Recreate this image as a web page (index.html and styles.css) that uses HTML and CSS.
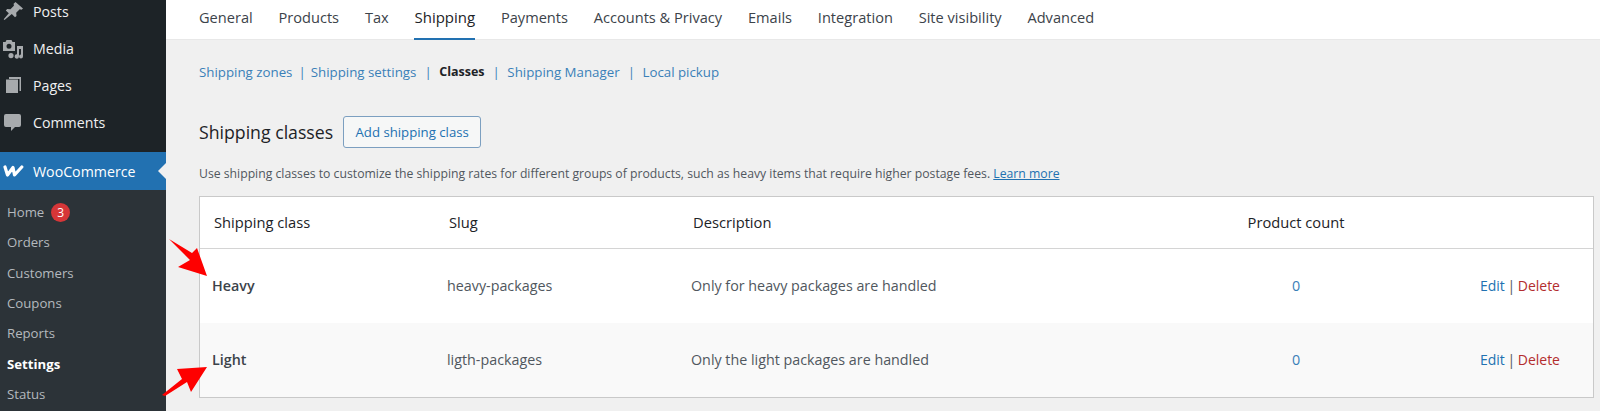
FILE: index.html
```html
<!DOCTYPE html>
<html lang="en">
<head>
<meta charset="utf-8">
<title>Shipping classes</title>
<link rel="stylesheet" href="styles.css">
</head>
<body>
<div class="app">
  <aside class="sidebar">
    <ul class="menu">
      <li class="menu-item"><svg class="mi" viewBox="0 0 20 20"><path d="M12.500 0l7.500 6.500-1.500 1.300-1.800-.6-3.500 3.500.3 3.300-1.500 1.300-3.200-3.400L1.500 18l-.8-.7 5.100-6.100-3-2.800 1.400-1.500 3.200.3 3.500-3.400-.3-2z"/></svg>Posts</li>
      <li class="menu-item"><svg class="mi" viewBox="0 0 20 20"><path fill-rule="evenodd" d="M0 3h2.500l1-2h5l1 2H12v9H0zm6 1.800a2.500 2.500 0 1 0 0 5 2.500 2.500 0 0 0 0-5z"/><path d="M14 7h6v10.500a2 2 0 1 1-2-2V10h-2v7.500a2.200 2.200 0 1 1-2-2.200zM8 14a2.600 2.600 0 1 1 0 5.200A2.600 2.600 0 0 1 8 14z"/></svg>Media</li>
      <li class="menu-item"><svg class="mi" viewBox="0 0 20 20"><path d="M6 2h12v14h-1.500V4H6z"/><path d="M3 4.500h12V18H3z"/></svg>Pages</li>
      <li class="menu-item"><svg class="mi" viewBox="0 0 20 20"><path d="M3 2h13a2 2 0 0 1 2 2v9a2 2 0 0 1-2 2h-4l-4 4v-4H3a2 2 0 0 1-2-2V4a2 2 0 0 1 2-2z"/></svg>Comments</li>
    </ul>
    <div class="woo">
      <svg class="woo-logo" viewBox="0 0 21 12"><path d="M2 2l2.500 8L10 2.500 11.500 10 18.800 2" fill="none" stroke="#fff" stroke-width="3.200" stroke-linejoin="round" stroke-linecap="round"/></svg>
      <span>WooCommerce</span>
    </div>
    <ul class="submenu">
      <li>Home <span class="badge">3</span></li>
      <li>Orders</li>
      <li>Customers</li>
      <li>Coupons</li>
      <li>Reports</li>
      <li class="current">Settings</li>
      <li>Status</li>
    </ul>
  </aside>
  <main class="main">
    <nav class="tabs">
      <a>General</a><a>Products</a><a>Tax</a><a class="active">Shipping</a><a>Payments</a><a>Accounts &amp; Privacy</a><a>Emails</a><a>Integration</a><a>Site visibility</a><a>Advanced</a>
    </nav>
    <div class="content">
      <div class="subnav">
        <a>Shipping zones</a><i>|</i><a>Shipping settings</a><i class="wide">|</i><b>Classes</b><i class="wide">|</i><a>Shipping Manager</a><i class="wide">|</i><a>Local pickup</a>
      </div>
      <div class="heading">
        <h2>Shipping classes</h2>
        <button class="add">Add shipping class</button>
      </div>
      <p class="desc">Use shipping classes to customize the shipping rates for different groups of products, such as heavy items that require higher postage fees. <a>Learn more</a></p>
      <section class="table">
        <div class="row head">
          <div class="c1">Shipping class</div><div class="c2">Slug</div><div class="c3">Description</div><div class="c4">Product count</div><div class="c5"></div>
        </div>
        <div class="row">
          <div class="c1 name">Heavy</div><div class="c2">heavy-packages</div><div class="c3">Only for heavy packages are handled</div><div class="c4 count">0</div><div class="c5"><a>Edit</a> | <a class="del">Delete</a></div>
        </div>
        <div class="row alt">
          <div class="c1 name">Light</div><div class="c2">ligth-packages</div><div class="c3">Only the light packages are handled</div><div class="c4 count">0</div><div class="c5"><a>Edit</a> | <a class="del">Delete</a></div>
        </div>
      </section>
    </div>
  </main>
  <svg class="arrow arrow-a" viewBox="0 0 38 37"><path d="M0 0L23 14 28 9 38 37 9 28 21 21z" fill="#fe0000"/></svg>
  <svg class="arrow arrow-b" viewBox="0 0 45 30"><path d="M0 28L20 12 15 2 45 0 29 25 25 15 3 29z" fill="#fe0000"/></svg>
</div>
</body>
</html>
```
FILE: styles.css
```css
* { box-sizing: border-box; }
html, body { margin: 0; height: 100%; overflow: hidden; }
body { font-family: "Open Sans", "Noto Sans", sans-serif; background: #f0f0f0; color: #3c434a; }
ul { list-style: none; margin: 0; padding: 0; }
.app { position: relative; display: flex; width: 1600px; height: 411px; overflow: hidden; }

.sidebar { width: 166px; flex: none; background: #1d2327; color: #f0f0f1; font-size: 14.200px; }
.menu { margin-top: -6.500px; height: 158.500px; }
.menu-item { height: 36.800px; display: flex; align-items: center; padding-left: 3px; }
.mi { width: 20px; height: 20px; margin-right: 10px; fill: #a7aaad; flex: none; }
.woo { height: 38px; background: #2271b1; color: #fff; display: flex; align-items: center; padding-left: 3px; position: relative; }
.woo::after { content: ""; position: absolute; right: 0; top: 11px; border: 8px solid transparent; border-right-color: #f0f0f0; border-left-width: 0; }
.woo-logo { width: 21px; height: 12px; margin-right: 9px; flex: none; }
.submenu { background: #2c3338; height: 221px; padding-top: 7px; font-size: 13.200px; color: #b4b9be; }
.submenu li { height: 30.300px; padding-left: 7px; display: flex; align-items: center; gap: 7px; }
.submenu .current { color: #fff; font-weight: 700; }
.badge { width: 19px; height: 19px; border-radius: 50%; background: #d63638; color: #fff; font-size: 12px; display: flex; align-items: center; justify-content: center; }

.main { flex: 1; min-width: 0; }
.tabs { height: 40px; background: #fff; border-bottom: 1px solid #e8e8e8; display: flex; align-items: flex-start; padding-left: 33px; gap: 25.800px; font-size: 14.600px; color: #3c434a; }
.tabs a { height: 40px; line-height: 35px; }
.tabs .active { color: #1d2327; font-size: 15px; font-weight: 500; border-bottom: 2px solid #2271b1; }

.content { padding: 0 6px 0 33px; height: 371px; display: flex; flex-direction: column; }
.subnav { margin-top: 22px; height: 20px; line-height: 20px; font-size: 13.300px; display: flex; white-space: nowrap; }
.subnav a { color: #3a80b8; }
.subnav b { color: #1d2327; font-weight: 700; font-size: 12.500px; }
.subnav i { font-style: normal; color: #3a80b8; margin: 0 5px 0 6px; }
.subnav i.wide { margin: 0 7.500px 0 8px; }

.heading { margin-top: 34px; display: flex; align-items: center; gap: 10px; }
.heading h2 { margin: 0; font-size: 17.700px; font-weight: 500; color: #1d2327; }
.add { height: 32px; width: 138px; padding: 0; border: 1px solid #7c9fc0; border-radius: 3px; background: #f6f7f7; color: #2271b1; font: 13.200px "Open Sans", sans-serif; }

.desc { margin: 17.500px 0 0; height: 16px; line-height: 16px; font-size: 12.220px; color: #50575e; white-space: nowrap; }
.desc a { color: #2271b1; text-decoration: underline; }

.table { margin-top: 14px; background: #fff; border: 1px solid #c9c9c9; }
.row { display: grid; grid-template-columns: 235px 244px 537px 160px 1fr; align-items: center; height: 74px; font-size: 14.300px; color: #50575e; }
.row.head { height: 52px; padding-bottom: 1px; font-size: 14.700px; color: #1d2327; font-weight: 500; border-bottom: 1px solid #d4d4d4; }
.row.alt { background: #f9f9f9; }
.c1, .c2, .c3 { padding-left: 12px; }
.row.head .c1, .row.head .c2, .row.head .c3 { padding-left: 14px; }
.c1.name { color: #3c434a; font-weight: 600; }
.c4 { white-space: nowrap; text-align: center; }
.count { color: #3a80b8; }
.c5 { font-size: 14px; word-spacing: -1px; text-align: right; padding-right: 33px; white-space: nowrap; }
.c5 a { color: #2271b1; }
.c5 .del { color: #b32d2e; }

.arrow { position: absolute; }
.arrow-a { left: 169px; top: 239px; width: 38px; height: 37px; }
.arrow-b { left: 162px; top: 367px; width: 45px; height: 30px; }
```
